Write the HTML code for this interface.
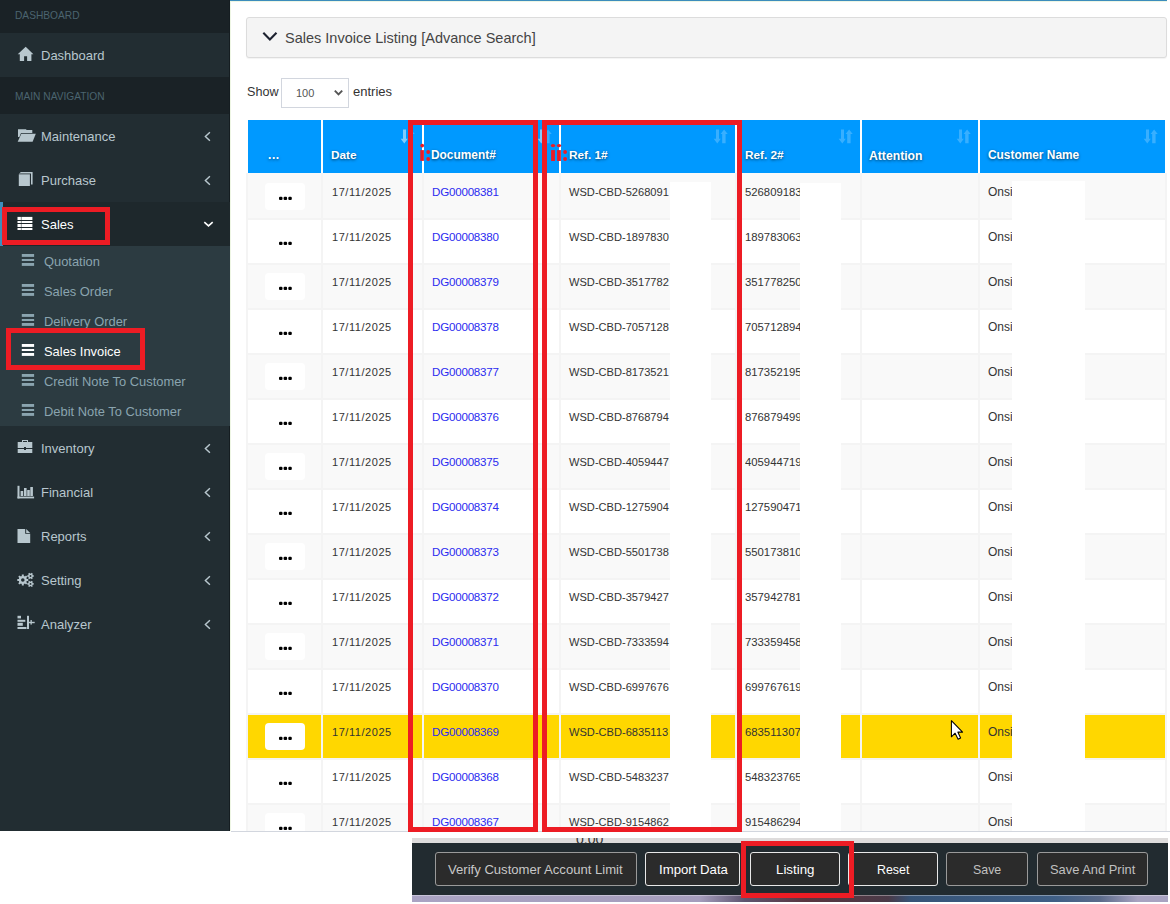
<!DOCTYPE html>
<html><head><meta charset="utf-8"><title>Sales Invoice</title>
<style>
html,body{margin:0;padding:0;}
body{width:1170px;height:904px;overflow:hidden;position:relative;background:#fff;font-family:"Liberation Sans",sans-serif;}
.a{position:absolute;box-sizing:content-box;}
.t{position:absolute;white-space:nowrap;font-family:"Liberation Sans",sans-serif;}
svg.a{display:block;overflow:visible}
</style></head><body>
<div class="a" style="left:0px;top:0px;width:230px;height:831px;background:#222d32"></div>
<div class="a" style="left:0px;top:0px;width:230px;height:33px;background:#1a2226"></div>
<div class="a" style="left:0px;top:77px;width:230px;height:37px;background:#1a2226"></div>
<div class="a" style="left:229px;top:0px;width:1px;height:831px;background:#151d21"></div>
<div class="a" style="left:230px;top:0px;width:1px;height:831px;background:#eef6e4"></div>
<div class="t" style="left:15px;top:11px;font-size:10.2px;line-height:10.2px;color:#4b646f;">DASHBOARD</div>
<div class="t" style="left:15px;top:92px;font-size:10.2px;line-height:10.2px;color:#4b646f;">MAIN NAVIGATION</div>
<svg class="a" style="left:17px;top:46px" width="17" height="16" viewBox="0 0 17 16"><path d="M8.7 0.8 L16.4 8.2 L14.4 8.2 L14.4 15 L10.1 15 L10.1 10.2 L7.1 10.2 L7.1 15 L2.8 15 L2.8 8.2 L0.7 8.2 Z" fill="#b8c7ce"/></svg>
<div class="t" style="left:41px;top:49px;font-size:13px;line-height:13px;color:#b8c7ce;">Dashboard</div>
<svg class="a" style="left:17px;top:128px" width="20" height="15" viewBox="0 0 20 15"><path d="M1 1.2 H9 L9.6 2 H15.3 V5 H4 L2.4 9 H1 Z" fill="#b8c7ce"/><path d="M4.3 5.8 H18.8 L15.6 13.8 H0.7 Z" fill="#b8c7ce"/></svg>
<div class="t" style="left:41px;top:130px;font-size:13px;line-height:13px;color:#b8c7ce;">Maintenance</div>
<svg class="a" style="left:203px;top:130px" width="10" height="12" viewBox="0 0 10 12"><path d="M6.9 2.2 L2.4 6.5 L6.9 10.7" fill="none" stroke="#b8c7ce" stroke-width="1.45"/></svg>
<svg class="a" style="left:18px;top:171px" width="16" height="16" viewBox="0 0 16 16"><path d="M0.9 2.9 L2.8 1 H14.6 V13.4 H13 V2.4 H2.2 Z" fill="#b8c7ce"/><path d="M0.8 3.3 H11.9 V15 H0.8 Z" fill="#b8c7ce"/></svg>
<div class="t" style="left:41px;top:174px;font-size:13px;line-height:13px;color:#b8c7ce;">Purchase</div>
<svg class="a" style="left:203px;top:174px" width="10" height="12" viewBox="0 0 10 12"><path d="M6.9 2.2 L2.4 6.5 L6.9 10.7" fill="none" stroke="#b8c7ce" stroke-width="1.45"/></svg>
<div class="a" style="left:0px;top:202px;width:230px;height:44px;background:#1e282c"></div>
<div class="a" style="left:0px;top:202px;width:3px;height:44px;background:#3c8dbc"></div>
<svg class="a" style="left:17px;top:216px" width="16" height="15" viewBox="0 0 16 15"><g fill="#fff"><rect x="0.5" y="0.9" width="3.4" height="3.1"/><rect x="4.4" y="0.9" width="11" height="3.1"/><rect x="0.5" y="5" width="3.4" height="2"/><rect x="4.4" y="5" width="11" height="2"/><rect x="0.5" y="8" width="3.4" height="3"/><rect x="4.4" y="8" width="11" height="3"/><rect x="0.5" y="12" width="3.4" height="2"/><rect x="4.4" y="12" width="11" height="2"/></g></svg>
<div class="t" style="left:41px;top:218px;font-size:13px;line-height:13px;color:#ffffff;">Sales</div>
<svg class="a" style="left:202px;top:218px" width="13" height="10" viewBox="0 0 13 10"><path d="M2.3 4.1 L6.5 7.9 L10.7 4.1" fill="none" stroke="#fff" stroke-width="1.6"/></svg>
<div class="a" style="left:0px;top:246px;width:230px;height:180px;background:#2c3b41"></div>
<svg class="a" style="left:21px;top:254px" width="14" height="13" viewBox="0 0 14 13"><g fill="#8aa4af"><rect x="0.8" y="0" width="12.3" height="2.9"/><rect x="0.8" y="5" width="12.3" height="2"/><rect x="0.8" y="9" width="12.3" height="2.9"/></g></svg>
<div class="t" style="left:44px;top:256px;font-size:12.9px;line-height:12.9px;color:#8aa4af;">Quotation</div>
<svg class="a" style="left:21px;top:284px" width="14" height="13" viewBox="0 0 14 13"><g fill="#8aa4af"><rect x="0.8" y="0" width="12.3" height="2.9"/><rect x="0.8" y="5" width="12.3" height="2"/><rect x="0.8" y="9" width="12.3" height="2.9"/></g></svg>
<div class="t" style="left:44px;top:286px;font-size:12.9px;line-height:12.9px;color:#8aa4af;">Sales Order</div>
<svg class="a" style="left:21px;top:314px" width="14" height="13" viewBox="0 0 14 13"><g fill="#8aa4af"><rect x="0.8" y="0" width="12.3" height="2.9"/><rect x="0.8" y="5" width="12.3" height="2"/><rect x="0.8" y="9" width="12.3" height="2.9"/></g></svg>
<div class="t" style="left:44px;top:316px;font-size:12.9px;line-height:12.9px;color:#8aa4af;">Delivery Order</div>
<svg class="a" style="left:21px;top:344px" width="14" height="13" viewBox="0 0 14 13"><g fill="#ffffff"><rect x="0.8" y="0" width="12.3" height="2.9"/><rect x="0.8" y="5" width="12.3" height="2"/><rect x="0.8" y="9" width="12.3" height="2.9"/></g></svg>
<div class="t" style="left:44px;top:346px;font-size:12.9px;line-height:12.9px;color:#ffffff;">Sales Invoice</div>
<svg class="a" style="left:21px;top:374px" width="14" height="13" viewBox="0 0 14 13"><g fill="#8aa4af"><rect x="0.8" y="0" width="12.3" height="2.9"/><rect x="0.8" y="5" width="12.3" height="2"/><rect x="0.8" y="9" width="12.3" height="2.9"/></g></svg>
<div class="t" style="left:44px;top:376px;font-size:12.9px;line-height:12.9px;color:#8aa4af;">Credit Note To Customer</div>
<svg class="a" style="left:21px;top:404px" width="14" height="13" viewBox="0 0 14 13"><g fill="#8aa4af"><rect x="0.8" y="0" width="12.3" height="2.9"/><rect x="0.8" y="5" width="12.3" height="2"/><rect x="0.8" y="9" width="12.3" height="2.9"/></g></svg>
<div class="t" style="left:44px;top:406px;font-size:12.9px;line-height:12.9px;color:#8aa4af;">Debit Note To Customer</div>
<svg class="a" style="left:17px;top:439px" width="16" height="15" viewBox="0 0 16 15"><path d="M5 3 V1 H11 V3 H10 V2 H6 V3 Z" fill="#b8c7ce"/><path d="M0.7 3 H15.3 V9 H9 V8 H7 V9 H0.7 Z" fill="#b8c7ce"/><path d="M0.7 10 H7 V11 H9 V10 H15.3 V14 H0.7 Z" fill="#b8c7ce"/></svg>
<div class="t" style="left:41px;top:442px;font-size:13px;line-height:13px;color:#b8c7ce;">Inventory</div>
<svg class="a" style="left:203px;top:442px" width="10" height="12" viewBox="0 0 10 12"><path d="M6.9 2.2 L2.4 6.5 L6.9 10.7" fill="none" stroke="#b8c7ce" stroke-width="1.45"/></svg>
<svg class="a" style="left:17px;top:485px" width="18" height="14" viewBox="0 0 18 14"><g fill="#b8c7ce"><rect x="0.5" y="0.8" width="2" height="12.6"/><rect x="0.5" y="11.6" width="16.6" height="1.8"/><rect x="3.6" y="6" width="2.6" height="5"/><rect x="7" y="3" width="2.6" height="8"/><rect x="10.2" y="5" width="2.6" height="6"/><rect x="13.3" y="2" width="2.6" height="9"/></g></svg>
<div class="t" style="left:41px;top:486px;font-size:13px;line-height:13px;color:#b8c7ce;">Financial</div>
<svg class="a" style="left:203px;top:486px" width="10" height="12" viewBox="0 0 10 12"><path d="M6.9 2.2 L2.4 6.5 L6.9 10.7" fill="none" stroke="#b8c7ce" stroke-width="1.45"/></svg>
<svg class="a" style="left:17px;top:528px" width="15" height="16" viewBox="0 0 15 16"><path d="M0.5 0.9 H8.2 V5.8 H13.2 V15 H0.5 Z" fill="#b8c7ce"/><path d="M9.2 0.9 L13.2 5 H9.2 Z" fill="#b8c7ce"/></svg>
<div class="t" style="left:41px;top:530px;font-size:13px;line-height:13px;color:#b8c7ce;">Reports</div>
<svg class="a" style="left:203px;top:530px" width="10" height="12" viewBox="0 0 10 12"><path d="M6.9 2.2 L2.4 6.5 L6.9 10.7" fill="none" stroke="#b8c7ce" stroke-width="1.45"/></svg>
<svg class="a" style="left:16px;top:571px" width="19" height="18" viewBox="0 0 19 18"><circle cx="6.8" cy="9" r="4.0" fill="#b8c7ce"/><line x1="12.30" y1="9.00" x2="1.30" y2="9.00" stroke="#b8c7ce" stroke-width="2.0"/><line x1="10.69" y1="12.89" x2="2.91" y2="5.11" stroke="#b8c7ce" stroke-width="2.0"/><line x1="6.80" y1="14.50" x2="6.80" y2="3.50" stroke="#b8c7ce" stroke-width="2.0"/><line x1="2.91" y1="12.89" x2="10.69" y2="5.11" stroke="#b8c7ce" stroke-width="2.0"/><circle cx="6.8" cy="9" r="1.8" fill="#222d32"/><circle cx="14.5" cy="5" r="2.4" fill="#b8c7ce"/><line x1="17.80" y1="5.00" x2="11.20" y2="5.00" stroke="#b8c7ce" stroke-width="1.4"/><line x1="16.15" y1="7.86" x2="12.85" y2="2.14" stroke="#b8c7ce" stroke-width="1.4"/><line x1="12.85" y1="7.86" x2="16.15" y2="2.14" stroke="#b8c7ce" stroke-width="1.4"/><circle cx="14.5" cy="5" r="0.95" fill="#222d32"/><circle cx="14.5" cy="12.9" r="2.4" fill="#b8c7ce"/><line x1="17.80" y1="12.90" x2="11.20" y2="12.90" stroke="#b8c7ce" stroke-width="1.4"/><line x1="16.15" y1="15.76" x2="12.85" y2="10.04" stroke="#b8c7ce" stroke-width="1.4"/><line x1="12.85" y1="15.76" x2="16.15" y2="10.04" stroke="#b8c7ce" stroke-width="1.4"/><circle cx="14.5" cy="12.9" r="0.95" fill="#222d32"/></svg>
<div class="t" style="left:41px;top:574px;font-size:13px;line-height:13px;color:#b8c7ce;">Setting</div>
<svg class="a" style="left:203px;top:574px" width="10" height="12" viewBox="0 0 10 12"><path d="M6.9 2.2 L2.4 6.5 L6.9 10.7" fill="none" stroke="#b8c7ce" stroke-width="1.45"/></svg>
<svg class="a" style="left:17px;top:615px" width="18" height="15" viewBox="0 0 18 15"><g fill="#b8c7ce"><rect x="0.5" y="0.8" width="3.5" height="2.6"/><rect x="0.5" y="4.8" width="7.8" height="2"/><rect x="0.5" y="7.8" width="5.3" height="3"/><rect x="0.5" y="12" width="9" height="2"/><rect x="10" y="0.8" width="2" height="13.2"/><rect x="12" y="6.8" width="5.7" height="1.4"/><rect x="13.5" y="5" width="1.3" height="4.6"/></g></svg>
<div class="t" style="left:41px;top:618px;font-size:13px;line-height:13px;color:#b8c7ce;">Analyzer</div>
<svg class="a" style="left:203px;top:618px" width="10" height="12" viewBox="0 0 10 12"><path d="M6.9 2.2 L2.4 6.5 L6.9 10.7" fill="none" stroke="#b8c7ce" stroke-width="1.45"/></svg>
<div class="a" style="left:2px;top:207px;width:98px;height:28px;border:5px solid #ed1c24;"></div>
<div class="a" style="left:6px;top:328px;width:129px;height:32px;border:5px solid #ed1c24;"></div>
<div class="a" style="left:230px;top:0px;width:937px;height:1px;background:#3c8dbc"></div>
<div class="a" style="left:231px;top:1px;width:936px;height:1px;background:#eef6e4"></div>
<div class="a" style="left:246px;top:17px;width:919px;height:39px;background:#f4f4f4;border:1px solid #dcdcdc;border-radius:3px;box-shadow:0 1px 1px rgba(0,0,0,0.05)"></div>
<svg class="a" style="left:261px;top:30px" width="17" height="13" viewBox="0 0 17 13"><path d="M2.3 2.7 L8.9 9.5 L15.5 2.7" fill="none" stroke="#1d2230" stroke-width="2.1"/></svg>
<div class="t" style="left:285px;top:31px;font-size:14.5px;line-height:14.5px;color:#444;">Sales Invoice Listing [Advance Search]</div>
<div class="t" style="left:247px;top:86px;font-size:12.6px;line-height:12.6px;color:#333;">Show</div>
<div class="a" style="left:281px;top:78px;width:66px;height:28px;border:1px solid #d2d6de;background:#fff"></div>
<div class="t" style="left:296px;top:88px;font-size:11px;line-height:11px;color:#555;">100</div>
<svg class="a" style="left:333px;top:88px" width="12" height="10" viewBox="0 0 12 10"><path d="M1.8 2.6 L5.5 6.4 L9.2 2.6" fill="none" stroke="#555" stroke-width="1.9"/></svg>
<div class="t" style="left:353px;top:85px;font-size:13px;line-height:13px;color:#333;">entries</div>
<div class="a" style="left:246px;top:120px;width:921px;height:53px;background:#0099ff"></div>
<div class="a" style="left:246px;top:120px;width:2px;height:53px;background:#fff"></div>
<div class="a" style="left:321px;top:120px;width:2px;height:53px;background:#fff"></div>
<div class="a" style="left:422px;top:120px;width:2px;height:53px;background:#fff"></div>
<div class="a" style="left:559px;top:120px;width:2px;height:53px;background:#fff"></div>
<div class="a" style="left:735px;top:120px;width:2px;height:53px;background:#fff"></div>
<div class="a" style="left:860px;top:120px;width:2px;height:53px;background:#fff"></div>
<div class="a" style="left:978px;top:120px;width:2px;height:53px;background:#fff"></div>
<div class="a" style="left:1165px;top:120px;width:5px;height:53px;background:#fff"></div>
<div class="t" style="left:268px;top:149px;font-size:12px;line-height:12px;color:#fff;font-weight:bold;text-shadow:0 1px 3px rgba(0,0,0,0.6);letter-spacing:0.6px">...</div>
<div class="t" style="left:331px;top:150px;font-size:11.8px;line-height:11.8px;color:#fff;font-weight:bold;text-shadow:0 1px 3px rgba(0,0,0,0.6);">Date</div>
<div class="t" style="left:431px;top:150px;font-size:11.9px;line-height:11.9px;color:#fff;font-weight:bold;text-shadow:0 1px 3px rgba(0,0,0,0.6);">Document#</div>
<div class="t" style="left:569px;top:150px;font-size:11.8px;line-height:11.8px;color:#fff;font-weight:bold;text-shadow:0 1px 3px rgba(0,0,0,0.6);">Ref. 1#</div>
<div class="t" style="left:745px;top:150px;font-size:11.8px;line-height:11.8px;color:#fff;font-weight:bold;text-shadow:0 1px 3px rgba(0,0,0,0.6);">Ref. 2#</div>
<div class="t" style="left:869px;top:150px;font-size:12.2px;line-height:12.2px;color:#fff;font-weight:bold;text-shadow:0 1px 3px rgba(0,0,0,0.6);">Attention</div>
<div class="t" style="left:988px;top:150px;font-size:11.9px;line-height:11.9px;color:#fff;font-weight:bold;text-shadow:0 1px 3px rgba(0,0,0,0.6);">Customer Name</div>
<svg class="a" style="left:400px;top:128px" width="16" height="17" viewBox="0 0 16 17"><path d="M3 1.5 H6 V10.8 H7.8 L4.3 15.5 L0.7 10.8 H3 Z" fill="rgba(255,255,255,0.5)"/><path d="M9.2 15.2 H12.6 V6 H14.7 L11.1 1.5 L7.6 6 H9.2 Z" fill="rgba(255,255,255,0.22)"/></svg>
<svg class="a" style="left:537px;top:128px" width="16" height="17" viewBox="0 0 16 17"><path d="M3 1.5 H6 V10.8 H7.8 L4.3 15.5 L0.7 10.8 H3 Z" fill="rgba(255,255,255,0.5)"/><path d="M9.2 15.2 H12.6 V6 H14.7 L11.1 1.5 L7.6 6 H9.2 Z" fill="rgba(255,255,255,0.22)"/></svg>
<svg class="a" style="left:713px;top:128px" width="16" height="17" viewBox="0 0 16 17"><path d="M3 1.5 H6 V10.8 H7.8 L4.3 15.5 L0.7 10.8 H3 Z" fill="rgba(255,255,255,0.22)"/><path d="M9.2 15.2 H12.6 V6 H14.7 L11.1 1.5 L7.6 6 H9.2 Z" fill="rgba(255,255,255,0.22)"/></svg>
<svg class="a" style="left:838px;top:128px" width="16" height="17" viewBox="0 0 16 17"><path d="M3 1.5 H6 V10.8 H7.8 L4.3 15.5 L0.7 10.8 H3 Z" fill="rgba(255,255,255,0.22)"/><path d="M9.2 15.2 H12.6 V6 H14.7 L11.1 1.5 L7.6 6 H9.2 Z" fill="rgba(255,255,255,0.22)"/></svg>
<svg class="a" style="left:956px;top:128px" width="16" height="17" viewBox="0 0 16 17"><path d="M3 1.5 H6 V10.8 H7.8 L4.3 15.5 L0.7 10.8 H3 Z" fill="rgba(255,255,255,0.22)"/><path d="M9.2 15.2 H12.6 V6 H14.7 L11.1 1.5 L7.6 6 H9.2 Z" fill="rgba(255,255,255,0.22)"/></svg>
<svg class="a" style="left:1143px;top:128px" width="16" height="17" viewBox="0 0 16 17"><path d="M3 1.5 H6 V10.8 H7.8 L4.3 15.5 L0.7 10.8 H3 Z" fill="rgba(255,255,255,0.22)"/><path d="M9.2 15.2 H12.6 V6 H14.7 L11.1 1.5 L7.6 6 H9.2 Z" fill="rgba(255,255,255,0.22)"/></svg>
<div class="a" style="left:0;top:173px;width:1170px;height:658px;overflow:hidden">
<div class="a" style="left:248px;top:0px;width:917px;height:45px;background:#f9f9f9"></div>
<div class="a" style="left:265px;top:10px;width:40px;height:27px;background:#fff;border-radius:4px"></div>
<div class="t" style="left:332px;top:14px;font-size:11px;line-height:11px;color:#333;letter-spacing:0.55px">17/11/2025</div>
<div class="t" style="left:432px;top:13px;font-size:11.6px;line-height:11.6px;color:#2b2bf0;letter-spacing:-0.22px">DG00008381</div>
<div class="t" style="left:569px;top:14px;font-size:11.1px;line-height:11.1px;color:#333;">WSD-CBD-5268091</div>
<div class="t" style="left:745px;top:14px;font-size:11.3px;line-height:11.3px;color:#333;width:55px;overflow:hidden;white-space:nowrap">526809183</div>
<div class="t" style="left:988px;top:13px;font-size:12px;line-height:12px;color:#333;">Onsi</div>
<svg class="a" style="left:278px;top:22px" width="15" height="6" viewBox="0 0 15 6"><g fill="#000"><rect x="1" y="1.8" width="3.5" height="3.3" rx="1.1"/><rect x="5.6" y="1.8" width="3.5" height="3.3" rx="1.1"/><rect x="10.3" y="1.8" width="3.5" height="3.3" rx="1.1"/></g></svg>
<div class="a" style="left:248px;top:45px;width:917px;height:45px;background:#ffffff"></div>
<div class="t" style="left:332px;top:59px;font-size:11px;line-height:11px;color:#333;letter-spacing:0.55px">17/11/2025</div>
<div class="t" style="left:432px;top:58px;font-size:11.6px;line-height:11.6px;color:#2b2bf0;letter-spacing:-0.22px">DG00008380</div>
<div class="t" style="left:569px;top:59px;font-size:11.1px;line-height:11.1px;color:#333;">WSD-CBD-1897830</div>
<div class="t" style="left:745px;top:59px;font-size:11.3px;line-height:11.3px;color:#333;width:55px;overflow:hidden;white-space:nowrap">189783063</div>
<div class="t" style="left:988px;top:58px;font-size:12px;line-height:12px;color:#333;">Onsi</div>
<svg class="a" style="left:278px;top:67px" width="15" height="6" viewBox="0 0 15 6"><g fill="#000"><rect x="1" y="1.8" width="3.5" height="3.3" rx="1.1"/><rect x="5.6" y="1.8" width="3.5" height="3.3" rx="1.1"/><rect x="10.3" y="1.8" width="3.5" height="3.3" rx="1.1"/></g></svg>
<div class="a" style="left:248px;top:90px;width:917px;height:45px;background:#f9f9f9"></div>
<div class="a" style="left:265px;top:100px;width:40px;height:27px;background:#fff;border-radius:4px"></div>
<div class="t" style="left:332px;top:104px;font-size:11px;line-height:11px;color:#333;letter-spacing:0.55px">17/11/2025</div>
<div class="t" style="left:432px;top:103px;font-size:11.6px;line-height:11.6px;color:#2b2bf0;letter-spacing:-0.22px">DG00008379</div>
<div class="t" style="left:569px;top:104px;font-size:11.1px;line-height:11.1px;color:#333;">WSD-CBD-3517782</div>
<div class="t" style="left:745px;top:104px;font-size:11.3px;line-height:11.3px;color:#333;width:55px;overflow:hidden;white-space:nowrap">351778250</div>
<div class="t" style="left:988px;top:103px;font-size:12px;line-height:12px;color:#333;">Onsi</div>
<svg class="a" style="left:278px;top:112px" width="15" height="6" viewBox="0 0 15 6"><g fill="#000"><rect x="1" y="1.8" width="3.5" height="3.3" rx="1.1"/><rect x="5.6" y="1.8" width="3.5" height="3.3" rx="1.1"/><rect x="10.3" y="1.8" width="3.5" height="3.3" rx="1.1"/></g></svg>
<div class="a" style="left:248px;top:135px;width:917px;height:45px;background:#ffffff"></div>
<div class="t" style="left:332px;top:149px;font-size:11px;line-height:11px;color:#333;letter-spacing:0.55px">17/11/2025</div>
<div class="t" style="left:432px;top:148px;font-size:11.6px;line-height:11.6px;color:#2b2bf0;letter-spacing:-0.22px">DG00008378</div>
<div class="t" style="left:569px;top:149px;font-size:11.1px;line-height:11.1px;color:#333;">WSD-CBD-7057128</div>
<div class="t" style="left:745px;top:149px;font-size:11.3px;line-height:11.3px;color:#333;width:55px;overflow:hidden;white-space:nowrap">705712894</div>
<div class="t" style="left:988px;top:148px;font-size:12px;line-height:12px;color:#333;">Onsi</div>
<svg class="a" style="left:278px;top:157px" width="15" height="6" viewBox="0 0 15 6"><g fill="#000"><rect x="1" y="1.8" width="3.5" height="3.3" rx="1.1"/><rect x="5.6" y="1.8" width="3.5" height="3.3" rx="1.1"/><rect x="10.3" y="1.8" width="3.5" height="3.3" rx="1.1"/></g></svg>
<div class="a" style="left:248px;top:180px;width:917px;height:45px;background:#f9f9f9"></div>
<div class="a" style="left:265px;top:190px;width:40px;height:27px;background:#fff;border-radius:4px"></div>
<div class="t" style="left:332px;top:194px;font-size:11px;line-height:11px;color:#333;letter-spacing:0.55px">17/11/2025</div>
<div class="t" style="left:432px;top:193px;font-size:11.6px;line-height:11.6px;color:#2b2bf0;letter-spacing:-0.22px">DG00008377</div>
<div class="t" style="left:569px;top:194px;font-size:11.1px;line-height:11.1px;color:#333;">WSD-CBD-8173521</div>
<div class="t" style="left:745px;top:194px;font-size:11.3px;line-height:11.3px;color:#333;width:55px;overflow:hidden;white-space:nowrap">817352195</div>
<div class="t" style="left:988px;top:193px;font-size:12px;line-height:12px;color:#333;">Onsi</div>
<svg class="a" style="left:278px;top:202px" width="15" height="6" viewBox="0 0 15 6"><g fill="#000"><rect x="1" y="1.8" width="3.5" height="3.3" rx="1.1"/><rect x="5.6" y="1.8" width="3.5" height="3.3" rx="1.1"/><rect x="10.3" y="1.8" width="3.5" height="3.3" rx="1.1"/></g></svg>
<div class="a" style="left:248px;top:225px;width:917px;height:45px;background:#ffffff"></div>
<div class="t" style="left:332px;top:239px;font-size:11px;line-height:11px;color:#333;letter-spacing:0.55px">17/11/2025</div>
<div class="t" style="left:432px;top:238px;font-size:11.6px;line-height:11.6px;color:#2b2bf0;letter-spacing:-0.22px">DG00008376</div>
<div class="t" style="left:569px;top:239px;font-size:11.1px;line-height:11.1px;color:#333;">WSD-CBD-8768794</div>
<div class="t" style="left:745px;top:239px;font-size:11.3px;line-height:11.3px;color:#333;width:55px;overflow:hidden;white-space:nowrap">876879499</div>
<div class="t" style="left:988px;top:238px;font-size:12px;line-height:12px;color:#333;">Onsi</div>
<svg class="a" style="left:278px;top:247px" width="15" height="6" viewBox="0 0 15 6"><g fill="#000"><rect x="1" y="1.8" width="3.5" height="3.3" rx="1.1"/><rect x="5.6" y="1.8" width="3.5" height="3.3" rx="1.1"/><rect x="10.3" y="1.8" width="3.5" height="3.3" rx="1.1"/></g></svg>
<div class="a" style="left:248px;top:270px;width:917px;height:45px;background:#f9f9f9"></div>
<div class="a" style="left:265px;top:280px;width:40px;height:27px;background:#fff;border-radius:4px"></div>
<div class="t" style="left:332px;top:284px;font-size:11px;line-height:11px;color:#333;letter-spacing:0.55px">17/11/2025</div>
<div class="t" style="left:432px;top:283px;font-size:11.6px;line-height:11.6px;color:#2b2bf0;letter-spacing:-0.22px">DG00008375</div>
<div class="t" style="left:569px;top:284px;font-size:11.1px;line-height:11.1px;color:#333;">WSD-CBD-4059447</div>
<div class="t" style="left:745px;top:284px;font-size:11.3px;line-height:11.3px;color:#333;width:55px;overflow:hidden;white-space:nowrap">405944719</div>
<div class="t" style="left:988px;top:283px;font-size:12px;line-height:12px;color:#333;">Onsi</div>
<svg class="a" style="left:278px;top:292px" width="15" height="6" viewBox="0 0 15 6"><g fill="#000"><rect x="1" y="1.8" width="3.5" height="3.3" rx="1.1"/><rect x="5.6" y="1.8" width="3.5" height="3.3" rx="1.1"/><rect x="10.3" y="1.8" width="3.5" height="3.3" rx="1.1"/></g></svg>
<div class="a" style="left:248px;top:315px;width:917px;height:45px;background:#ffffff"></div>
<div class="t" style="left:332px;top:329px;font-size:11px;line-height:11px;color:#333;letter-spacing:0.55px">17/11/2025</div>
<div class="t" style="left:432px;top:328px;font-size:11.6px;line-height:11.6px;color:#2b2bf0;letter-spacing:-0.22px">DG00008374</div>
<div class="t" style="left:569px;top:329px;font-size:11.1px;line-height:11.1px;color:#333;">WSD-CBD-1275904</div>
<div class="t" style="left:745px;top:329px;font-size:11.3px;line-height:11.3px;color:#333;width:55px;overflow:hidden;white-space:nowrap">127590471</div>
<div class="t" style="left:988px;top:328px;font-size:12px;line-height:12px;color:#333;">Onsi</div>
<svg class="a" style="left:278px;top:337px" width="15" height="6" viewBox="0 0 15 6"><g fill="#000"><rect x="1" y="1.8" width="3.5" height="3.3" rx="1.1"/><rect x="5.6" y="1.8" width="3.5" height="3.3" rx="1.1"/><rect x="10.3" y="1.8" width="3.5" height="3.3" rx="1.1"/></g></svg>
<div class="a" style="left:248px;top:360px;width:917px;height:45px;background:#f9f9f9"></div>
<div class="a" style="left:265px;top:370px;width:40px;height:27px;background:#fff;border-radius:4px"></div>
<div class="t" style="left:332px;top:374px;font-size:11px;line-height:11px;color:#333;letter-spacing:0.55px">17/11/2025</div>
<div class="t" style="left:432px;top:373px;font-size:11.6px;line-height:11.6px;color:#2b2bf0;letter-spacing:-0.22px">DG00008373</div>
<div class="t" style="left:569px;top:374px;font-size:11.1px;line-height:11.1px;color:#333;">WSD-CBD-5501738</div>
<div class="t" style="left:745px;top:374px;font-size:11.3px;line-height:11.3px;color:#333;width:55px;overflow:hidden;white-space:nowrap">550173810</div>
<div class="t" style="left:988px;top:373px;font-size:12px;line-height:12px;color:#333;">Onsi</div>
<svg class="a" style="left:278px;top:382px" width="15" height="6" viewBox="0 0 15 6"><g fill="#000"><rect x="1" y="1.8" width="3.5" height="3.3" rx="1.1"/><rect x="5.6" y="1.8" width="3.5" height="3.3" rx="1.1"/><rect x="10.3" y="1.8" width="3.5" height="3.3" rx="1.1"/></g></svg>
<div class="a" style="left:248px;top:405px;width:917px;height:45px;background:#ffffff"></div>
<div class="t" style="left:332px;top:419px;font-size:11px;line-height:11px;color:#333;letter-spacing:0.55px">17/11/2025</div>
<div class="t" style="left:432px;top:418px;font-size:11.6px;line-height:11.6px;color:#2b2bf0;letter-spacing:-0.22px">DG00008372</div>
<div class="t" style="left:569px;top:419px;font-size:11.1px;line-height:11.1px;color:#333;">WSD-CBD-3579427</div>
<div class="t" style="left:745px;top:419px;font-size:11.3px;line-height:11.3px;color:#333;width:55px;overflow:hidden;white-space:nowrap">357942781</div>
<div class="t" style="left:988px;top:418px;font-size:12px;line-height:12px;color:#333;">Onsi</div>
<svg class="a" style="left:278px;top:427px" width="15" height="6" viewBox="0 0 15 6"><g fill="#000"><rect x="1" y="1.8" width="3.5" height="3.3" rx="1.1"/><rect x="5.6" y="1.8" width="3.5" height="3.3" rx="1.1"/><rect x="10.3" y="1.8" width="3.5" height="3.3" rx="1.1"/></g></svg>
<div class="a" style="left:248px;top:450px;width:917px;height:45px;background:#f9f9f9"></div>
<div class="a" style="left:265px;top:460px;width:40px;height:27px;background:#fff;border-radius:4px"></div>
<div class="t" style="left:332px;top:464px;font-size:11px;line-height:11px;color:#333;letter-spacing:0.55px">17/11/2025</div>
<div class="t" style="left:432px;top:463px;font-size:11.6px;line-height:11.6px;color:#2b2bf0;letter-spacing:-0.22px">DG00008371</div>
<div class="t" style="left:569px;top:464px;font-size:11.1px;line-height:11.1px;color:#333;">WSD-CBD-7333594</div>
<div class="t" style="left:745px;top:464px;font-size:11.3px;line-height:11.3px;color:#333;width:55px;overflow:hidden;white-space:nowrap">733359458</div>
<div class="t" style="left:988px;top:463px;font-size:12px;line-height:12px;color:#333;">Onsi</div>
<svg class="a" style="left:278px;top:472px" width="15" height="6" viewBox="0 0 15 6"><g fill="#000"><rect x="1" y="1.8" width="3.5" height="3.3" rx="1.1"/><rect x="5.6" y="1.8" width="3.5" height="3.3" rx="1.1"/><rect x="10.3" y="1.8" width="3.5" height="3.3" rx="1.1"/></g></svg>
<div class="a" style="left:248px;top:495px;width:917px;height:45px;background:#ffffff"></div>
<div class="t" style="left:332px;top:509px;font-size:11px;line-height:11px;color:#333;letter-spacing:0.55px">17/11/2025</div>
<div class="t" style="left:432px;top:508px;font-size:11.6px;line-height:11.6px;color:#2b2bf0;letter-spacing:-0.22px">DG00008370</div>
<div class="t" style="left:569px;top:509px;font-size:11.1px;line-height:11.1px;color:#333;">WSD-CBD-6997676</div>
<div class="t" style="left:745px;top:509px;font-size:11.3px;line-height:11.3px;color:#333;width:55px;overflow:hidden;white-space:nowrap">699767619</div>
<div class="t" style="left:988px;top:508px;font-size:12px;line-height:12px;color:#333;">Onsi</div>
<svg class="a" style="left:278px;top:517px" width="15" height="6" viewBox="0 0 15 6"><g fill="#000"><rect x="1" y="1.8" width="3.5" height="3.3" rx="1.1"/><rect x="5.6" y="1.8" width="3.5" height="3.3" rx="1.1"/><rect x="10.3" y="1.8" width="3.5" height="3.3" rx="1.1"/></g></svg>
<div class="a" style="left:248px;top:540px;width:917px;height:45px;background:#ffd700"></div>
<div class="a" style="left:265px;top:550px;width:40px;height:27px;background:#fff;border-radius:4px"></div>
<div class="t" style="left:332px;top:554px;font-size:11px;line-height:11px;color:#333;letter-spacing:0.55px">17/11/2025</div>
<div class="t" style="left:432px;top:553px;font-size:11.6px;line-height:11.6px;color:#2b2bf0;letter-spacing:-0.22px">DG00008369</div>
<div class="t" style="left:569px;top:554px;font-size:11.1px;line-height:11.1px;color:#333;">WSD-CBD-6835113</div>
<div class="t" style="left:745px;top:554px;font-size:11.3px;line-height:11.3px;color:#333;width:55px;overflow:hidden;white-space:nowrap">683511307</div>
<div class="t" style="left:988px;top:553px;font-size:12px;line-height:12px;color:#333;">Onsi</div>
<svg class="a" style="left:278px;top:562px" width="15" height="6" viewBox="0 0 15 6"><g fill="#000"><rect x="1" y="1.8" width="3.5" height="3.3" rx="1.1"/><rect x="5.6" y="1.8" width="3.5" height="3.3" rx="1.1"/><rect x="10.3" y="1.8" width="3.5" height="3.3" rx="1.1"/></g></svg>
<div class="a" style="left:248px;top:585px;width:917px;height:45px;background:#ffffff"></div>
<div class="t" style="left:332px;top:599px;font-size:11px;line-height:11px;color:#333;letter-spacing:0.55px">17/11/2025</div>
<div class="t" style="left:432px;top:598px;font-size:11.6px;line-height:11.6px;color:#2b2bf0;letter-spacing:-0.22px">DG00008368</div>
<div class="t" style="left:569px;top:599px;font-size:11.1px;line-height:11.1px;color:#333;">WSD-CBD-5483237</div>
<div class="t" style="left:745px;top:599px;font-size:11.3px;line-height:11.3px;color:#333;width:55px;overflow:hidden;white-space:nowrap">548323765</div>
<div class="t" style="left:988px;top:598px;font-size:12px;line-height:12px;color:#333;">Onsi</div>
<svg class="a" style="left:278px;top:607px" width="15" height="6" viewBox="0 0 15 6"><g fill="#000"><rect x="1" y="1.8" width="3.5" height="3.3" rx="1.1"/><rect x="5.6" y="1.8" width="3.5" height="3.3" rx="1.1"/><rect x="10.3" y="1.8" width="3.5" height="3.3" rx="1.1"/></g></svg>
<div class="a" style="left:248px;top:630px;width:917px;height:45px;background:#f9f9f9"></div>
<div class="a" style="left:265px;top:640px;width:40px;height:27px;background:#fff;border-radius:4px"></div>
<div class="t" style="left:332px;top:644px;font-size:11px;line-height:11px;color:#333;letter-spacing:0.55px">17/11/2025</div>
<div class="t" style="left:432px;top:643px;font-size:11.6px;line-height:11.6px;color:#2b2bf0;letter-spacing:-0.22px">DG00008367</div>
<div class="t" style="left:569px;top:644px;font-size:11.1px;line-height:11.1px;color:#333;">WSD-CBD-9154862</div>
<div class="t" style="left:745px;top:644px;font-size:11.3px;line-height:11.3px;color:#333;width:55px;overflow:hidden;white-space:nowrap">915486294</div>
<div class="t" style="left:988px;top:643px;font-size:12px;line-height:12px;color:#333;">Onsi</div>
<svg class="a" style="left:278px;top:652px" width="15" height="6" viewBox="0 0 15 6"><g fill="#000"><rect x="1" y="1.8" width="3.5" height="3.3" rx="1.1"/><rect x="5.6" y="1.8" width="3.5" height="3.3" rx="1.1"/><rect x="10.3" y="1.8" width="3.5" height="3.3" rx="1.1"/></g></svg>
<div class="a" style="left:246px;top:45px;width:921px;height:2px;background:#f4f4f4"></div>
<div class="a" style="left:246px;top:90px;width:921px;height:2px;background:#f4f4f4"></div>
<div class="a" style="left:246px;top:135px;width:921px;height:2px;background:#f4f4f4"></div>
<div class="a" style="left:246px;top:180px;width:921px;height:2px;background:#f4f4f4"></div>
<div class="a" style="left:246px;top:225px;width:921px;height:2px;background:#f4f4f4"></div>
<div class="a" style="left:246px;top:270px;width:921px;height:2px;background:#f4f4f4"></div>
<div class="a" style="left:246px;top:315px;width:921px;height:2px;background:#f4f4f4"></div>
<div class="a" style="left:246px;top:360px;width:921px;height:2px;background:#f4f4f4"></div>
<div class="a" style="left:246px;top:405px;width:921px;height:2px;background:#f4f4f4"></div>
<div class="a" style="left:246px;top:450px;width:921px;height:2px;background:#f4f4f4"></div>
<div class="a" style="left:246px;top:495px;width:921px;height:2px;background:#f4f4f4"></div>
<div class="a" style="left:246px;top:540px;width:921px;height:2px;background:#f4f4f4"></div>
<div class="a" style="left:246px;top:585px;width:921px;height:2px;background:#f4f4f4"></div>
<div class="a" style="left:246px;top:630px;width:921px;height:2px;background:#f4f4f4"></div>
<div class="a" style="left:246px;top:0px;width:2px;height:658px;background:#f4f4f4"></div>
<div class="a" style="left:321px;top:0px;width:2px;height:658px;background:#f4f4f4"></div>
<div class="a" style="left:422px;top:0px;width:2px;height:658px;background:#f4f4f4"></div>
<div class="a" style="left:559px;top:0px;width:2px;height:658px;background:#f4f4f4"></div>
<div class="a" style="left:735px;top:0px;width:2px;height:658px;background:#f4f4f4"></div>
<div class="a" style="left:860px;top:0px;width:2px;height:658px;background:#f4f4f4"></div>
<div class="a" style="left:978px;top:0px;width:2px;height:658px;background:#f4f4f4"></div>
<div class="a" style="left:1165px;top:0px;width:2px;height:658px;background:#f4f4f4"></div>
<div class="a" style="left:670px;top:9px;width:41px;height:650px;background:#fff"></div>
<div class="a" style="left:800px;top:10px;width:41px;height:650px;background:#fff"></div>
<div class="a" style="left:1012px;top:8px;width:73px;height:650px;background:#fff"></div>
</div>
<div class="a" style="left:231px;top:831px;width:939px;height:1px;background:#d2d6de"></div>
<svg class="a" style="left:950px;top:719px" width="14" height="21" viewBox="0 0 14 21"><path d="M1.4 1.7 V17.8 L5.1 14.2 L8.1 20.2 L10.6 19 L7.8 13.1 L12.6 13.1 Z" fill="#fff" stroke="#000" stroke-width="1.05" stroke-linejoin="round"/></svg>
<div class="a" style="left:408px;top:120px;width:120px;height:702px;border:5px solid #ed1c24;"></div>
<div class="a" style="left:542px;top:120px;width:190px;height:702px;border:5px solid #ed1c24;"></div>
<svg class="a" style="left:418px;top:142px" width="16" height="22" viewBox="0 0 16 22"><g fill="#ed1c24"><circle cx="4.2" cy="3.6" r="1.9"/><rect x="2.3" y="8.1" width="3.6" height="10.8"/><circle cx="10.2" cy="10" r="1.9"/><circle cx="10.2" cy="17" r="1.9"/></g></svg>
<svg class="a" style="left:549px;top:142px" width="22" height="22" viewBox="0 0 22 22"><g fill="#ed1c24"><ellipse cx="4" cy="3.6" rx="2.2" ry="1.6"/><rect x="2.1" y="8.1" width="3.8" height="10.9"/><ellipse cx="10" cy="3.6" rx="2.2" ry="1.6"/><rect x="8.1" y="8.1" width="3.8" height="10.9"/><circle cx="16.1" cy="10" r="1.9"/><circle cx="16.1" cy="17" r="1.95"/></g></svg>
<div class="a" style="left:412px;top:838px;width:756px;height:5px;background:#dedcdc"></div>
<div class="a" style="left:560px;top:838px;width:60px;height:5px;overflow:hidden"><div class="t" style="left:16px;top:-6px;font-size:14px;line-height:14px;color:#333">0.00</div></div>
<div class="a" style="left:412px;top:843px;width:756px;height:52px;background:#222b30"></div>
<div class="a" style="left:412px;top:895px;width:756px;height:7px;background:linear-gradient(90deg,#aaa3c3 0%,#a59dbd 38%,#5d5570 44%,#5a3640 52%,#4a3a48 63%,#365478 66%,#3f5f86 85%,#5a6a8a 91%,#a9a3c1 96%)"></div>
<div class="a" style="left:412px;top:895px;width:756px;height:1px;background:rgba(255,255,255,0.35)"></div>
<div class="a" style="left:435px;top:852px;width:200px;height:32px;border:1px solid #9a9a9a;border-radius:3px;background:#2b2b2b"></div>
<div class="t" style="left:448px;top:863px;font-size:13.1px;line-height:13.1px;color:#c8c8c8;">Verify Customer Account Limit</div>
<div class="a" style="left:645px;top:852px;width:93px;height:32px;border:1px solid #e8e8e8;border-radius:3px;background:#2b2b2b"></div>
<div class="t" style="left:659px;top:863px;font-size:13.2px;line-height:13.2px;color:#ffffff;">Import Data</div>
<div class="a" style="left:750px;top:852px;width:88px;height:32px;border:1px solid #e8e8e8;border-radius:3px;background:#2b2b2b"></div>
<div class="t" style="left:776px;top:863px;font-size:13.3px;line-height:13.3px;color:#ffffff;">Listing</div>
<div class="a" style="left:848px;top:852px;width:88px;height:32px;border:1px solid #e8e8e8;border-radius:3px;background:#2b2b2b"></div>
<div class="t" style="left:877px;top:864px;font-size:12.4px;line-height:12.4px;color:#ffffff;">Reset</div>
<div class="a" style="left:946px;top:852px;width:80px;height:32px;border:1px solid #9a9a9a;border-radius:3px;background:#2b2b2b"></div>
<div class="t" style="left:973px;top:864px;font-size:12.4px;line-height:12.4px;color:#c0c0c0;">Save</div>
<div class="a" style="left:1037px;top:852px;width:109px;height:32px;border:1px solid #9a9a9a;border-radius:3px;background:#2b2b2b"></div>
<div class="t" style="left:1050px;top:864px;font-size:12.9px;line-height:12.9px;color:#c0c0c0;">Save And Print</div>
<div class="a" style="left:741px;top:841px;width:103px;height:47px;border:5px solid #ed1c24;"></div>
</body></html>
